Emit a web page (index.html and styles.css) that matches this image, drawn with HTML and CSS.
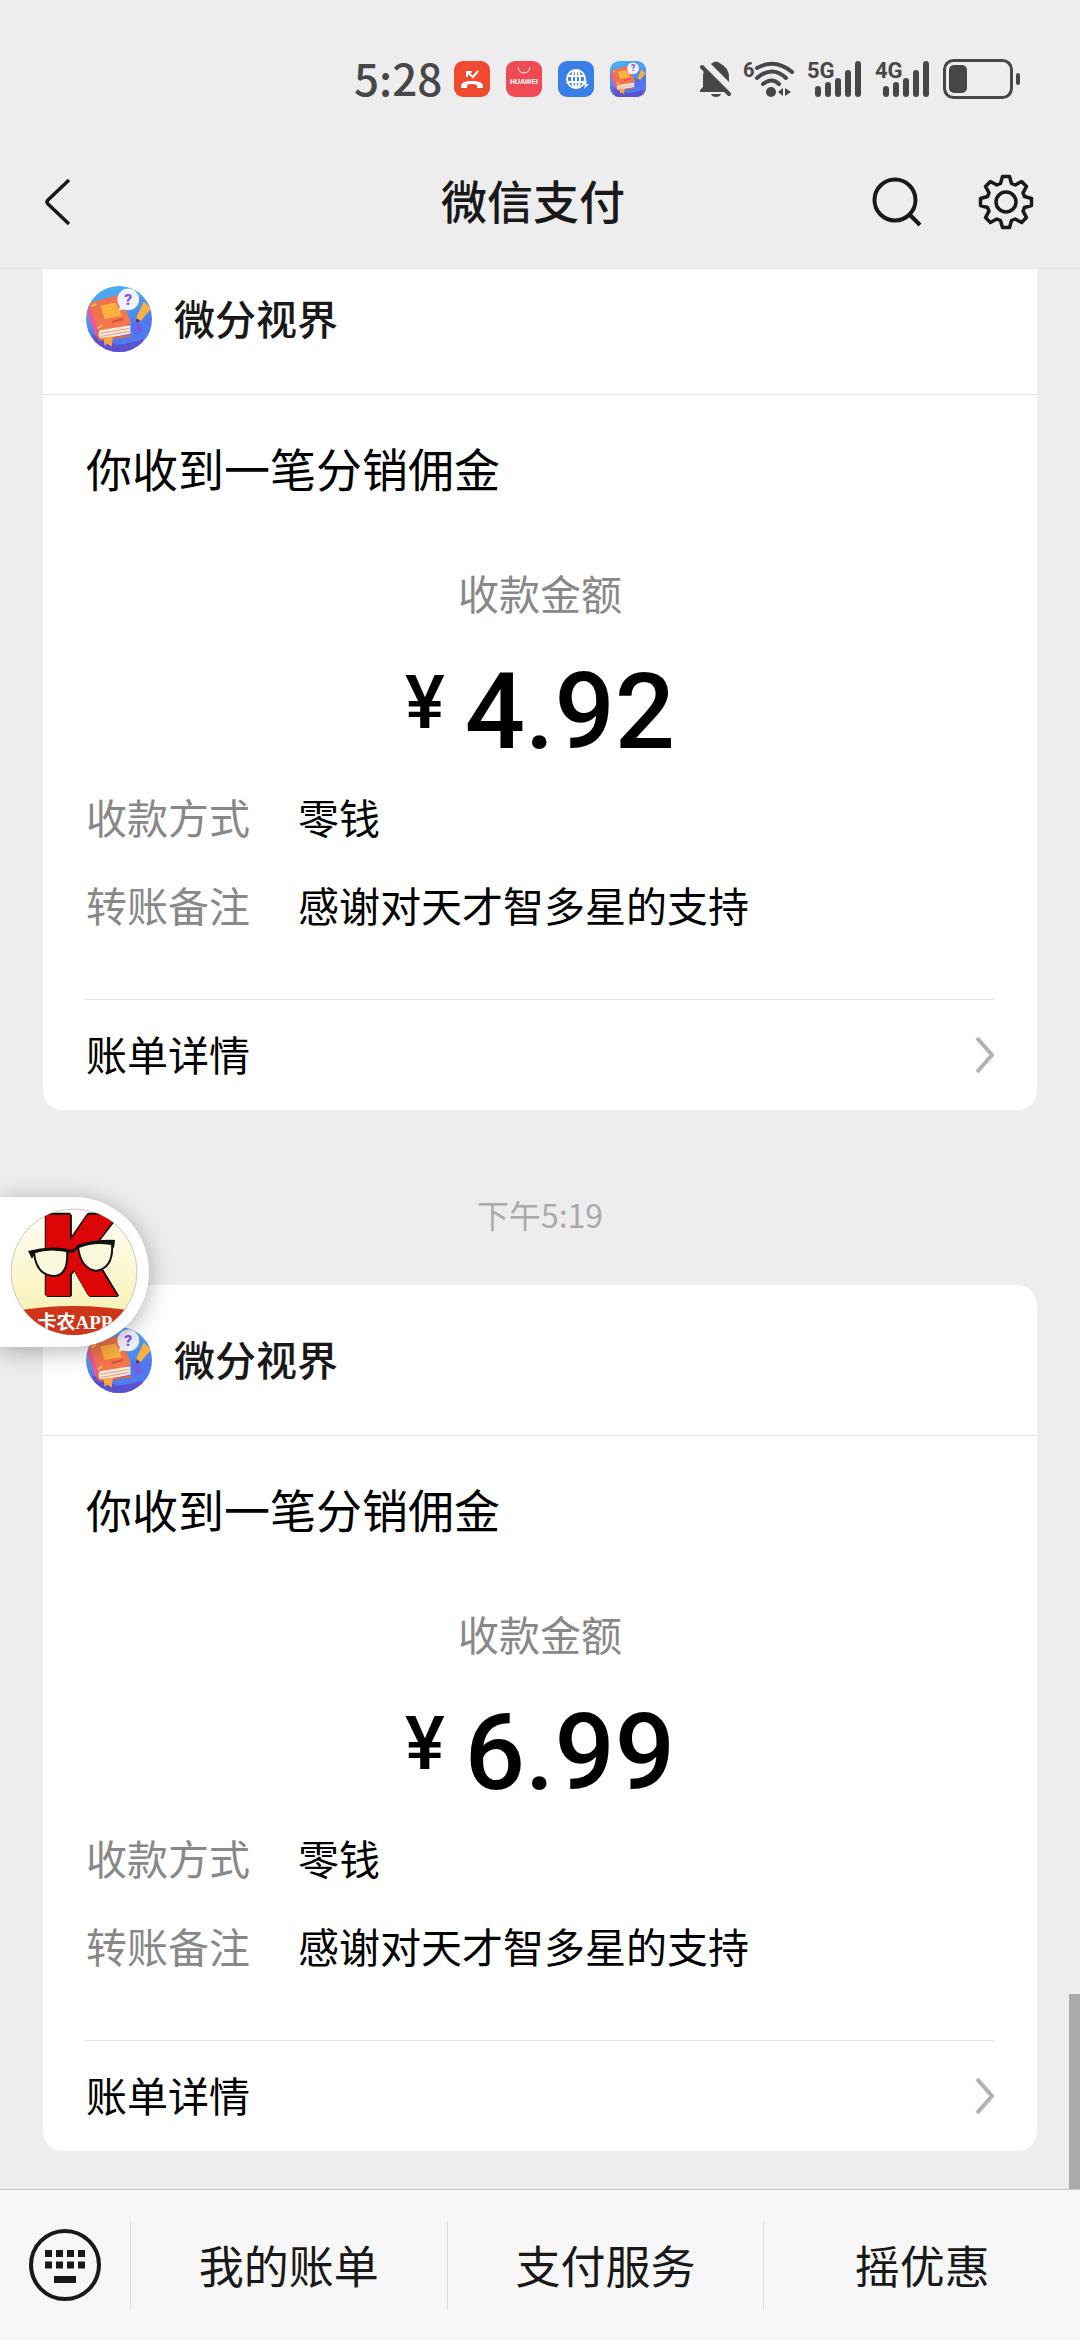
FILE: index.html
```html
<!DOCTYPE html>
<html lang="zh-CN">
<head>
    <meta charset="UTF-8">
    <meta name="viewport" content="width=device-width, initial-scale=1.0">
    <title>微信支付</title>
    <link rel="stylesheet" href="styles.css">
</head>
<body>
    <!-- 公用图标 -->
    <svg class="defs" width="0" height="0" aria-hidden="true">
        <defs>
            <linearGradient id="sky" x1="0" y1="0" x2="0.3" y2="1">
                <stop offset="0" stop-color="#4fb4f2"/>
                <stop offset="0.6" stop-color="#4a8df0"/>
                <stop offset="1" stop-color="#6a4fd6"/>
            </linearGradient>
            <linearGradient id="cover" x1="0" y1="0" x2="1" y2="1">
                <stop offset="0" stop-color="#f0704f"/>
                <stop offset="1" stop-color="#f5794a"/>
            </linearGradient>
        </defs>
        <symbol id="book" viewBox="0 0 64 64">
            <rect width="64" height="64" fill="url(#sky)"/>
            <path d="M44 32 64 38V50L30 58 18 52Z" fill="#4c7cf0"/>
            <path d="M6 47 30 57 60 54 50 64H10Z" fill="#5a52cf"/>
            <path d="M44 38l8-3 4 9-8 3z" fill="#6c63e6"/>
            <path d="M3 19Q4 16 8 15L30 9Q33 8 34 11L44 36 14 51Z" fill="url(#cover)"/>
            <path d="M3 19 1 26 9 48 14 51 12 43Z" fill="#e8589a"/>
            <path d="M13 43 43 38V46L14 52Q10 48 13 43Z" fill="#fbe8d8"/>
            <path d="M14 46 42 41M14 49 42 44" stroke="#d9a795" stroke-width="1"/>
            <path d="M12 43Q9 49 14 52L44 48" fill="none" stroke="#e0604a" stroke-width="2"/>
            <path d="M14 19 29 16 35 29 18 32Z" fill="#fbb03f"/>
            <path d="M25 35 36 32" stroke="#d9503f" stroke-width="2"/>
            <path d="M5 20 10 17M11 41 16 38" stroke="#fbb64f" stroke-width="2"/>
            <path d="M17 50 26 49 25 59 21 56 18 58Z" fill="#fba53f"/>
            <path d="M56 15 63 22 53 34 48 36 49 30Z" fill="#fbb03f"/>
            <path d="M49 31 53 34 48 36Z" fill="#3b3f8f"/>
            <circle cx="41" cy="13" r="10.500" fill="#f4f2ff"/>
            <path d="M33 18 32 24 39 22Z" fill="#f4f2ff"/>
            <text x="41" y="18" class="book-mark">?</text>
        </symbol>
        <symbol id="arrow" viewBox="0 0 20 36">
            <path d="M3 1 18 18 3 35" fill="none" stroke="#b2b2b2" stroke-width="4"/>
        </symbol>
    </svg>

    <div class="app">
        <div class="status-bar">
            <div class="status-left">
                <span class="clock">5:28</span>
                <svg class="app-icon" viewBox="0 0 36 36">
                    <rect width="36" height="36" fill="#f04a30"/>
                    <path d="M13 11 19 16 24 10M13 16V11H18" fill="none" stroke="#fff" stroke-width="2"/>
                    <path d="M7 25Q7 20 18 20T29 25V27H23V24Q18 22 13 24V27H7Z" fill="#fff"/>
                </svg>
                <svg class="app-icon" viewBox="0 0 36 36">
                    <rect width="36" height="36" fill="#f04b54"/>
                    <path d="M12 6Q13 12 18 12T24 6" fill="none" stroke="#fff" stroke-width="1"/>
                    <text x="18" y="23" class="shop-name">HUAWEI</text>
                </svg>
                <svg class="app-icon" viewBox="0 0 36 36">
                    <rect width="36" height="36" fill="#3a7fe8"/>
                    <g fill="none" stroke="#fff" stroke-width="2">
                        <circle cx="18" cy="18" r="9"/>
                        <ellipse cx="18" cy="18" rx="4" ry="9"/>
                        <path d="M9 15H27M9 21H27M18 9V27"/>
                    </g>
                    <path d="M29 19 24 24H27L26 28 31 23H28Z" fill="#fff"/>
                </svg>
                <svg class="app-icon"><use href="#book"/></svg>
            </div>
            <div class="status-right">
                <svg width="32" height="38" viewBox="0 0 32 38">
                    <path d="M5 11 27 32H1V30L4 27V16Q4 13 5 11Z" fill="#474747"/>
                    <path d="M12 4Q17 -1 22 4Q30 8 30 17V22Z" fill="#474747"/>
                    <path d="M12 34H22Q21 37 17 37T12 34Z" fill="#474747"/>
                    <path d="M3 7 30 34" stroke="#474747" stroke-width="4" stroke-linecap="round"/>
                </svg>
                <svg width="52" height="38" viewBox="0 0 52 38">
                    <text x="0" y="17" class="net-small">6</text>
                    <path d="M14 8Q32 -2 49 12M14 18Q29 5 43 18M20 24Q29 17 36 24" fill="none" stroke="#474747" stroke-width="4" stroke-linecap="round"/>
                    <circle cx="28" cy="32" r="5" fill="#474747"/>
                    <path d="M40 28V36L35 32ZM42 28V36L48 32Z" fill="#474747"/>
                </svg>
                <svg width="56" height="38" viewBox="0 0 56 38">
                    <text x="0" y="18" class="net">5G</text>
                    <path d="M11 29V34M21 25V34M31 21V34M41 13V34M51 4V34" stroke="#474747" stroke-width="6" stroke-linecap="round"/>
                </svg>
                <svg width="56" height="38" viewBox="0 0 56 38">
                    <text x="0" y="18" class="net">4G</text>
                    <path d="M11 29V34M21 25V34M31 21V34M41 13V34M51 4V34" stroke="#474747" stroke-width="6" stroke-linecap="round"/>
                </svg>
                <svg width="78" height="40" viewBox="0 0 78 40">
                    <rect x="1.500" y="1.500" width="67" height="37" rx="9" fill="none" stroke="#474747" stroke-width="3"/>
                    <rect x="6" y="6" width="18" height="28" rx="5" fill="#474747"/>
                    <rect x="73" y="14" width="4" height="12" rx="2" fill="#474747"/>
                </svg>
            </div>
        </div>

        <header class="nav">
            <button type="button" class="nav-btn nav-back" aria-label="返回">
                <svg width="28" height="48" viewBox="0 0 28 48">
                    <path d="M25 2 4 22Q2 24 4 26L25 46" fill="none" stroke="#191919" stroke-width="3.500"/>
                </svg>
            </button>
            <h1>微信支付</h1>
            <div class="nav-tools">
                <button type="button" class="nav-btn" aria-label="搜索">
                    <svg width="50" height="50" viewBox="0 0 50 50">
                        <circle cx="23" cy="23" r="20.500" fill="none" stroke="#191919" stroke-width="4"/>
                        <path d="M37 37 48 48" stroke="#191919" stroke-width="4"/>
                    </svg>
                </button>
                <button type="button" class="nav-btn" aria-label="设置">
                    <svg width="56" height="56" viewBox="-28 -28 56 56">
                        <g fill="none" stroke="#191919" stroke-width="3.500" stroke-linejoin="round">
                            <path d="M-3.500-25.500H3.500L5.500-18.500 9.200-17 15.600-20.500 20.500-15.600 17-9.200 18.500-5.500 25.500-3.500V3.500L18.500 5.500 17 9.200 20.500 15.600 15.600 20.500 9.200 17 5.500 18.500 3.500 25.500H-3.500L-5.500 18.500-9.200 17-15.600 20.500-20.500 15.600-17 9.200-18.500 5.500-25.500 3.500V-3.500L-18.500-5.500-17-9.200-20.500-15.600-15.600-20.500-9.200-17-5.500-18.500Z"/>
                            <circle r="10"/>
                        </g>
                    </svg>
                </button>
            </div>
        </header>

        <main class="chat">
            <section class="card">
                <div class="card-head">
                    <svg class="avatar"><use href="#book"/></svg>
                    <span class="card-name">微分视界</span>
                </div>
                <div class="card-body">
                    <h2>你收到一笔分销佣金</h2>
                    <p class="amount-label">收款金额</p>
                    <p class="amount"><span class="yuan">¥</span><span>4.92</span></p>
                    <dl class="info">
                        <dt>收款方式</dt>
                        <dd>零钱</dd>
                        <dt>转账备注</dt>
                        <dd>感谢对天才智多星的支持</dd>
                    </dl>
                    <a href="#" class="detail">
                        <span>账单详情</span>
                        <svg width="20" height="36"><use href="#arrow"/></svg>
                    </a>
                </div>
            </section>

            <time class="chat-time">下午5:19</time>

            <section class="card">
                <div class="card-head">
                    <svg class="avatar"><use href="#book"/></svg>
                    <span class="card-name">微分视界</span>
                </div>
                <div class="card-body">
                    <h2>你收到一笔分销佣金</h2>
                    <p class="amount-label">收款金额</p>
                    <p class="amount"><span class="yuan">¥</span><span>6.99</span></p>
                    <dl class="info">
                        <dt>收款方式</dt>
                        <dd>零钱</dd>
                        <dt>转账备注</dt>
                        <dd>感谢对天才智多星的支持</dd>
                    </dl>
                    <a href="#" class="detail">
                        <span>账单详情</span>
                        <svg width="20" height="36"><use href="#arrow"/></svg>
                    </a>
                </div>
            </section>

            <div class="scroll-thumb"></div>
        </main>

        <footer class="menu">
            <button type="button" class="keyboard" aria-label="键盘">
                <svg width="74" height="74" viewBox="0 0 74 74">
                    <circle cx="37" cy="37" r="34" fill="none" stroke="#191919" stroke-width="4"/>
                    <path d="M17 25.500H58M17 37H58" stroke="#191919" stroke-width="7" stroke-dasharray="7 4"/>
                    <path d="M26 51.500H48" stroke="#191919" stroke-width="7"/>
                </svg>
            </button>
            <button type="button" class="menu-item">我的账单</button>
            <button type="button" class="menu-item">支付服务</button>
            <button type="button" class="menu-item">摇优惠</button>
        </footer>

        <!-- 悬浮窗 -->
        <a href="#" class="float-app" aria-label="卡农APP">
            <svg width="128" height="128" viewBox="0 0 128 128">
                <defs>
                    <clipPath id="round"><circle cx="64" cy="64" r="63"/></clipPath>
                    <linearGradient id="cream" x1="0" y1="0" x2="0" y2="1">
                        <stop offset="0" stop-color="#fffef8"/>
                        <stop offset="1" stop-color="#f7f0a8"/>
                    </linearGradient>
                </defs>
                <circle cx="64" cy="64" r="63" fill="url(#cream)" stroke="#c9c9c9"/>
                <g clip-path="url(#round)">
                    <text x="67" y="85" class="float-k">K</text>
                    <path d="M24 44Q42 38 57 42 59 66 45 68 26 68 24 44Z" fill="#fbf9dc" stroke="#111" stroke-width="2"/>
                    <path d="M68 38Q84 32 102 35 104 60 86 63 70 60 68 38Z" fill="#fbf9dc" stroke="#111" stroke-width="2"/>
                    <path d="M18 43Q40 37 62 42L68 37Q86 31 105 32L104 40 101 37Q84 34 69 40L62 45Q40 40 25 45L22 51Z" fill="#111"/>
                    <path d="M0 104Q64 92 128 104V128H0Z" fill="#cf3418"/>
                    <text x="65" y="121" class="float-name">卡农APP</text>
                </g>
            </svg>
        </a>
    </div>
</body>
</html>
```
FILE: styles.css
```css
* {
    margin: 0;
    padding: 0;
    box-sizing: border-box;
}

body {
    font-family: "Noto Sans CJK SC", sans-serif;
    background: #ededed;
    color: #191919;
}

button {
    background: none;
    border: none;
    font: inherit;
    color: inherit;
    cursor: pointer;
}

a {
    color: inherit;
    text-decoration: none;
}

svg {
    display: block;
    flex-shrink: 0;
}

.defs {
    position: absolute;
}

.app {
    position: relative;
    display: flex;
    flex-direction: column;
    height: 100vh;
    overflow: hidden;
}

/* 状态栏 */
.status-bar {
    display: flex;
    justify-content: space-between;
    align-items: center;
    height: 136px;
    flex-shrink: 0;
    padding: 22px 59px 0 354px;
    color: #474747;
}

.status-left {
    display: flex;
    align-items: center;
    gap: 16px;
}

.clock {
    margin-right: -4px;
    padding-bottom: 4px;
    font-size: 44px;
    line-height: 56px;
    font-weight: 500;
}

.app-icon {
    width: 36px;
    height: 36px;
    border-radius: 9px;
}

.status-right {
    display: flex;
    align-items: center;
    gap: 12px;
}

.net,
.net-small {
    font-family: Roboto, sans-serif;
    font-size: 22px;
    font-weight: 700;
    fill: #474747;
}

.net-small {
    font-size: 20px;
}

.shop-name {
    font-family: "Liberation Sans", sans-serif;
    font-size: 7px;
    font-weight: 700;
    text-anchor: middle;
    fill: #fff;
}

.book-mark {
    font-family: Roboto, sans-serif;
    font-size: 15px;
    font-weight: 900;
    text-anchor: middle;
    fill: #7a5be0;
}

/* 导航栏 */
.nav {
    display: grid;
    grid-template-columns: 1fr auto 1fr;
    align-items: center;
    height: 133px;
    flex-shrink: 0;
    padding: 0 46px 0 32px;
    border-bottom: 1px solid #e6e6e6;
}

.nav h1 {
    padding-bottom: 6px;
    font-size: 46px;
    line-height: 66px;
    font-weight: 500;
}

.nav-back {
    justify-self: start;
    padding-left: 12px;
}

.nav-tools {
    display: flex;
    justify-content: flex-end;
    align-items: center;
    gap: 56px;
}

/* 消息区，停在最底部 */
.chat {
    position: relative;
    flex: 1;
    min-height: 0;
    display: flex;
    flex-direction: column;
    justify-content: flex-end;
    padding: 0 43px 38px;
    overflow: hidden;
}

.card {
    flex-shrink: 0;
    background: #fff;
    border-radius: 20px;
}

.card-head {
    display: flex;
    align-items: center;
    gap: 22px;
    height: 151px;
    padding: 0 43px;
    border-bottom: 1px solid #e5e5e5;
}

.avatar {
    width: 66px;
    height: 66px;
    border-radius: 50%;
}

.card-name {
    padding-bottom: 4px;
    font-size: 41px;
    line-height: 60px;
    font-weight: 500;
}

.card-body {
    padding: 39px 43px 0;
    color: #000;
}

.card-body h2 {
    font-size: 46px;
    line-height: 66px;
    font-weight: 400;
}

.amount-label {
    margin-top: 62px;
    font-size: 41px;
    line-height: 60px;
    text-align: center;
    color: #888;
}

.amount {
    display: flex;
    justify-content: center;
    gap: 20px;
    margin-top: 30px;
    font-family: Roboto, sans-serif;
    font-size: 106px;
    line-height: 120px;
    font-weight: 500;
}

.yuan {
    font-size: 75px;
    line-height: 100px;
}

.info {
    display: grid;
    grid-template-columns: 171px 1fr;
    column-gap: 41px;
    row-gap: 28px;
    margin: 14px 0 65px;
    font-size: 41px;
    line-height: 60px;
}

.info dt {
    color: #888;
}

.detail {
    display: flex;
    justify-content: space-between;
    align-items: center;
    height: 111px;
    border-top: 1px solid #e5e5e5;
    font-size: 41px;
    line-height: 60px;
}

.detail span {
    padding-bottom: 4px;
}

.chat-time {
    padding: 80px 0 47px;
    font-size: 32px;
    line-height: 48px;
    text-align: center;
    color: #aaa;
}

.scroll-thumb {
    position: absolute;
    right: 0;
    bottom: 0;
    width: 11px;
    height: 195px;
    background: #aaa;
}

/* 底部菜单 */
.menu {
    display: flex;
    align-items: center;
    height: 151px;
    flex-shrink: 0;
    background: #f7f7f7;
    border-top: 1px solid #c8c8c8;
}

.keyboard {
    width: 130px;
    display: flex;
    justify-content: center;
}

.menu-item {
    flex: 1;
    height: 88px;
    border-left: 1px solid #dedede;
    font-size: 45px;
    line-height: 66px;
}

/* 悬浮窗 */
.float-app {
    position: absolute;
    left: 0;
    bottom: 993px;
    padding: 11px 11px 11px 10px;
    background: #fff;
    border-radius: 0 75px 75px 0;
    box-shadow: 0 4px 24px rgba(0, 0, 0, 0.3);
}

.float-k {
    font-family: Roboto, sans-serif;
    font-size: 106px;
    font-weight: 900;
    text-anchor: middle;
    fill: #dd0606;
    stroke: #dd0606;
    stroke-width: 6px;
    filter: drop-shadow(1px 1px 0 #111) drop-shadow(-1px -1px 0 #111) drop-shadow(1px -1px 0 #111);
}

.float-name {
    font-family: "Liberation Serif", "Noto Sans CJK SC", serif;
    font-size: 19px;
    font-weight: 700;
    text-anchor: middle;
    fill: #fff;
}
```
